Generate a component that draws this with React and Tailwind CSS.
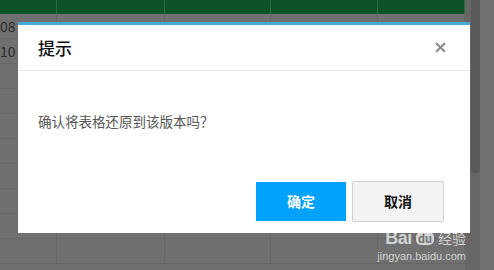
import { X } from "lucide-react";

const cols = [57, 108, 106, 107, 87];
const rows = [
  { no: "08" },
  { no: "10" },
  {}, {}, {}, {}, {}, {}, {}, {},
];

function Table() {
  return (
    <div className="flex flex-col">
      {/* header row */}
      <div className="flex h-[14px] bg-[#0b5229]">
        {cols.map((w, i) => (
          <div key={i} style={{ width: w }} className="border-r border-[#2c6a44] shrink-0" />
        ))}
      </div>
      {rows.map((r, i) => (
        <div key={i} className="flex h-[25px] border-b border-[#676767] bg-[#707070]">
          {cols.map((w, j) => (
            <div
              key={j}
              style={{ width: w }}
              className="border-r border-[#676767] shrink-0 text-[14px] leading-[24px] text-[#2c2c2c] overflow-hidden"
            >
              {j === 0 && r.no ? r.no : null}
            </div>
          ))}
        </div>
      ))}
    </div>
  );
}

export default function App() {
  return (
    <div
      className="relative w-[494px] h-[270px] overflow-hidden bg-[#707070]"
      style={{ fontFamily: '"Noto Sans CJK SC", "Noto Sans", sans-serif' }}
    >
      <div className="flex">
        <div className="w-[465px] shrink-0">
          <Table />
        </div>
        {/* scrollbar */}
        <div className="w-[15px] h-[270px] bg-[#676767] flex justify-end shrink-0">
          <div className="w-[9px] h-[173px] bg-[#5a5a5a] rounded-b-[3px]" />
        </div>
        <div className="flex-1 h-[270px] bg-[#727272]" />
      </div>

      {/* dialog */}
      <div className="absolute left-[18px] top-[22px] w-[452px] h-[211px] bg-white border-t-[3px] border-[#47a7d7] flex flex-col">
        <div className="h-[46px] flex items-center justify-between pl-[20px] pr-[22px] border-b border-[#e6e6e6]">
          <span className="text-[17px] font-medium text-[#111] leading-none">提示</span>
          <X size={15} strokeWidth={3.5} className="text-[#8a8a8a]" />
        </div>
        <div className="pl-[20px] pt-[40px] text-[13.5px] text-[#555] leading-[20px]">
          确认将表格还原到该版本吗？
        </div>
        <div className="mt-auto flex justify-end gap-[6px] pr-[26px] pb-[11px]">
          <button className="w-[90px] h-[39px] mt-[1px] bg-[#00a2fb] text-white text-[14px] font-bold">
            确定
          </button>
          <button className="w-[92px] h-[41px] bg-[#f3f3f3] border border-[#cfcfcf] rounded-[2px] text-[#111] text-[14px] font-bold">
            取消
          </button>
        </div>
      </div>

      {/* watermark */}
      <div className="absolute right-[28px] top-[229px] flex flex-col items-end text-white/70 leading-none whitespace-nowrap">
        <div className="flex items-center gap-[4px]">
          <span className="text-[18px] font-bold tracking-tight" style={{ fontFamily: '"Liberation Sans", sans-serif' }}>
            Bai
          </span>
          <span className="bg-white/70 text-[#707070] text-[11px] font-bold rounded-[5px] px-[2px] h-[13px] flex items-center">
            du
          </span>
          <span className="text-[14px]">经验</span>
        </div>
        <span className="mt-[4px] text-[11px]" style={{ fontFamily: '"Liberation Sans", sans-serif' }}>
          jingyan.baidu.com
        </span>
      </div>
    </div>
  );
}
